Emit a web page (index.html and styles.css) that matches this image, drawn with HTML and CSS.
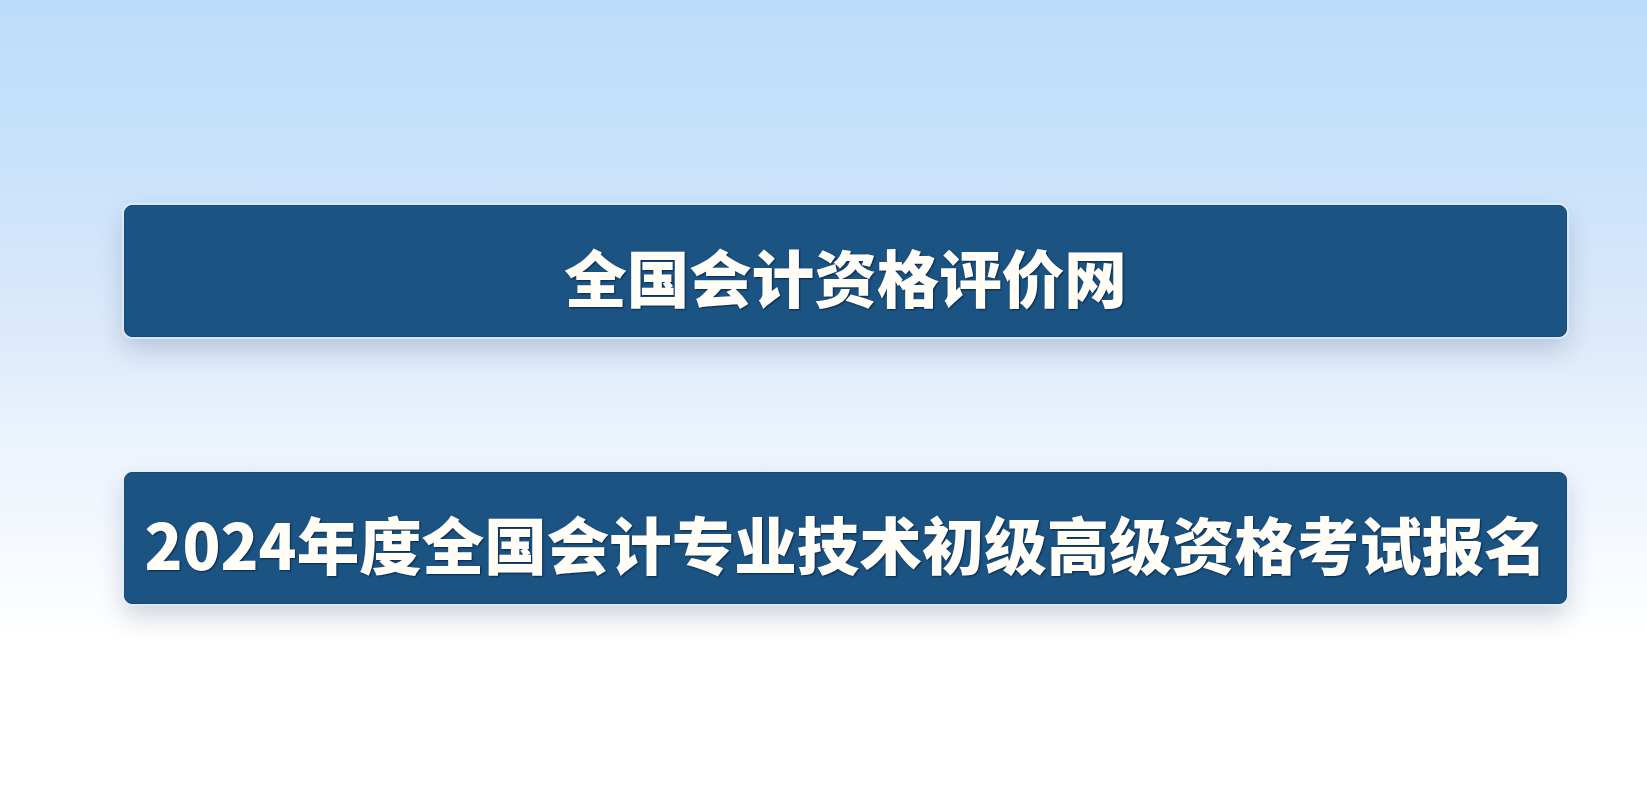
FILE: index.html
```html
<!DOCTYPE html>
<html lang="zh-CN">
<head>
    <meta charset="UTF-8">
    <meta name="viewport" content="width=device-width, initial-scale=1.0">
    <title>全国会计资格评价网</title>
    <link rel="stylesheet" href="styles.css">
</head>
<body>
    <div class="banner-list">
        <div class="banner">全国会计资格评价网</div>
        <div class="banner">2024年度全国会计专业技术初级高级资格考试报名</div>
    </div>
</body>
</html>
```

FILE: styles.css
```css
html, body {
    height: 100%;
}
body {
    margin: 0;
    font-family: "Noto Sans CJK SC", "Noto Sans", sans-serif;
    background: linear-gradient(to bottom,
        #bddcf9 0%,
        #c8e2fa 20%,
        #dbe9fb 40%,
        #ebf3fd 55%,
        #f7faff 70%,
        #ffffff 80%,
        #ffffff 100%);
}
.banner-list {
    display: flex;
    flex-direction: column;
    gap: 135px;
    padding: 205px 80px 0 124px;
}
.banner {
    height: 132px;
    box-sizing: border-box;
    display: flex;
    align-items: center;
    justify-content: center;
    padding-top: 8px;
    background-color: #1b5483;
    border: 1px solid #174a75;
    border-radius: 8px;
    box-shadow: 0 0 0 2px rgba(225, 240, 255, 0.7), 0 12px 26px rgba(40, 60, 90, 0.22);
    color: #fffdf6;
    font-size: 62.5px;
    font-weight: 900;
    white-space: nowrap;
    text-shadow: 1px 1px 2px rgba(0, 20, 50, 0.7);
}
```
